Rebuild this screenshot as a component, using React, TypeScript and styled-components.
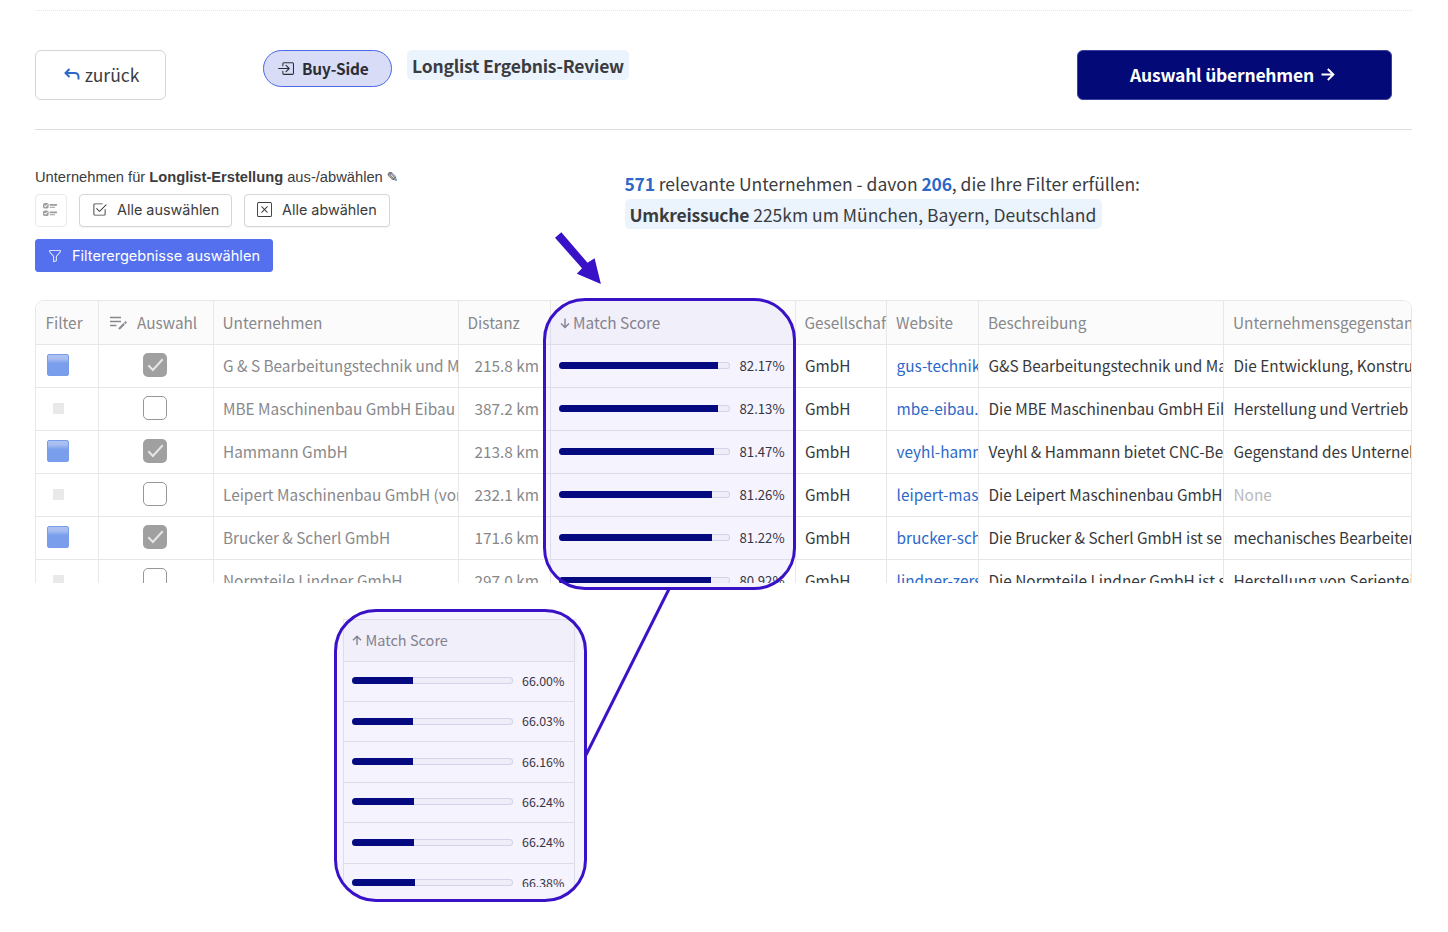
import React from "react";
import styled, { createGlobalStyle } from "styled-components";
import { BsBoxArrowInRight, BsCheck2Square, BsFunnel, BsUiChecks, BsXSquare } from "react-icons/bs";

const sans = `"Noto Sans CJK SC", "Noto Sans", sans-serif`;

const GlobalStyle = createGlobalStyle`
  * { box-sizing: border-box; }
  body { margin: 0; background: #fff; color: #3b3c40; font-family: ${sans}; overflow: hidden; }
  button { font: inherit; color: inherit; margin: 0; }
`;

const Page = styled.main`
  position: relative;
  width: 1448px;
  height: 932px;
  padding: 10px 36px 0 35px;
  overflow: hidden;
`;

const Header = styled.header`
  display: flex;
  align-items: flex-start;
  height: 120px;
  padding: 39px 20px 0 0;
  border-top: 1px dotted #e4e4e6;
  border-bottom: 1px solid #dcdcde;
`;

const BackButton = styled.button`
  display: flex;
  align-items: center;
  justify-content: center;
  gap: 5px;
  width: 131px;
  height: 50px;
  padding: 0 0 1px 2px;
  border: 1px solid #d5d5d8;
  border-radius: 6px;
  background: #fff;
  font-size: 17.5px;
  line-height: 24px;
`;

const SidePill = styled.div`
  display: flex;
  align-items: center;
  gap: 8px;
  width: 129px;
  height: 37px;
  margin-left: 97px;
  padding: 0 0 1px 13px;
  border: 1px solid #4c68e6;
  border-radius: 19px;
  background: #d8dcf6;
  color: #2c2d34;
  font-size: 15.4px;
  font-weight: 700;
  letter-spacing: -0.12px;
  line-height: 20px;
`;

const Highlight = styled.span<{ $w: number }>`
  display: block;
  width: ${(p) => p.$w}px;
  height: 30px;
  padding-left: 5px;
  border-radius: 5px;
  background: #ebf3fd;
  font-size: 17.5px;
  line-height: 32px;
  white-space: nowrap;
`;

const TitleBadge = styled.div`
  margin-left: 15px;
  font-weight: 700;
  letter-spacing: -0.21px;
`;

const ApplyButton = styled.button`
  display: flex;
  align-items: center;
  justify-content: center;
  gap: 7px;
  width: 315px;
  height: 50px;
  margin: 0 0 0 auto;
  padding: 0 4px 1px 0;
  border: 1px solid #3c4299;
  border-radius: 6px;
  background: #030a78;
  color: #fff;
  font-size: 17.5px;
  font-weight: 700;
  letter-spacing: -0.23px;
  line-height: 24px;
`;

const Controls = styled.section`
  display: flex;
  height: 170px;
  padding-top: 38px;
`;

const Selection = styled.div`
  width: 589.5px;
`;

const Caption = styled.p`
  height: 18px;
  margin: 0;
  font-family: "Liberation Sans", Arial, sans-serif;
  font-size: 14.7px;
  line-height: 18px;
  white-space: nowrap;
`;

const Pencil = styled.span`
  font-family: "DejaVu Sans", sans-serif;
  font-size: 14px;
  line-height: 1;
`;

const ButtonRow = styled.div<{ $top: number }>`
  display: flex;
  margin-top: ${(p) => p.$top}px;
`;

const ToolButton = styled.button<{ $w: number; $left?: number; $primary?: boolean; $faint?: boolean }>`
  display: flex;
  align-items: center;
  gap: 10px;
  width: ${(p) => p.$w}px;
  height: 33px;
  margin-left: ${(p) => p.$left ?? 0}px;
  padding: 0 0 ${(p) => (p.$primary ? 0 : 2)}px ${(p) => (p.$faint ? 7 : 12)}px;
  border: 1px solid ${(p) => (p.$primary ? "#5470ee" : p.$faint ? "#e9e9ec" : "#d5d5da")};
  border-radius: ${(p) => (p.$primary ? 3 : 4)}px;
  background: ${(p) => (p.$primary ? "#5470ee" : "#fff")};
  box-shadow: ${(p) => (p.$primary || p.$faint ? "none" : "0 1px 1px rgba(0, 0, 0, 0.05)")};
  color: ${(p) => (p.$primary ? "#fff" : p.$faint ? "#9c9ca0" : "#3b3c40")};
  font-family: Inter, Roboto, sans-serif;
  font-size: ${(p) => (p.$primary ? 14.55 : 14.4)}px;
  white-space: nowrap;
`;

const Summary = styled.div`
  font-size: 17.5px;
  line-height: 30px;
`;

const SummaryLine = styled.p`
  margin: 1px 0 0;
  white-space: nowrap;
`;

const Strong = styled.b`
  letter-spacing: -0.23px;
`;

const Count = styled(Strong)`
  color: #2d68c9;
`;

const Grid = styled.section`
  height: 283px;
  overflow: hidden;
  border: 1px solid #e7e7ea;
  border-bottom: 0;
  border-radius: 9px 9px 0 0;
`;

const GridRow = styled.div<{ $head?: boolean }>`
  display: grid;
  grid-template-columns: 63px 115px 245px 92px 245px 91px 92px 245px 187px;
  height: ${(p) => (p.$head ? 44 : 43)}px;
  background: ${(p) => (p.$head ? "#fbfbfc" : "#fff")};
`;

type Tone = "muted" | "link" | "none" | "dark";
const tones: Record<Tone, string> = { muted: "#88888b", link: "#2d68c9", none: "#b9b9bd", dark: "#37383c" };

const Cell = styled.div<{ $tone?: Tone; $end?: boolean; $inset?: number }>`
  display: flex;
  align-items: center;
  justify-content: ${(p) => (p.$end ? "flex-end" : "flex-start")};
  min-width: 0;
  overflow: hidden;
  padding: ${(p) => (p.$end ? "0 11px 3px 0" : `0 0 3px ${p.$inset ?? 9}px`)};
  border-right: 1px solid #e7e7ea;
  border-bottom: 1px solid #e7e7ea;
  color: ${(p) => tones[p.$tone ?? "dark"]};
  font-size: 15.36px;
  line-height: 22px;
  white-space: nowrap;
  &:last-child { border-right: 0; }
`;

const HeadCell = styled(Cell).attrs({ $tone: "muted" as Tone })`
  padding: 0 0 1px ${(p) => p.$inset ?? 8.5}px;
`;

const FilterCell = styled(Cell)`
  padding: 0 0 1px 11px;
`;

const Match = styled.span`
  width: 22px;
  height: 22px;
  margin-bottom: 2px;
  border: 1px solid #769ceb;
  border-radius: 2px;
  background: linear-gradient(#aec3f1 0, #a6bdf0 20%, #799eeb 42%);
`;

const NoMatch = styled.span`
  width: 11px;
  height: 11px;
  margin-left: 6px;
  background: #e9e9ea;
`;

const CheckCell = styled(Cell)`
  justify-content: center;
  padding: 0 2px 2px 0;
`;

const CheckBox = styled.span<{ $on: boolean }>`
  display: flex;
  align-items: center;
  justify-content: center;
  width: 24px;
  height: 24px;
  border: ${(p) => (p.$on ? "0" : "1.5px solid #97979a")};
  border-radius: 5px;
  background: ${(p) => (p.$on ? "#a0a0a1" : "#fff")};
`;

const ScoreCell = styled(Cell)`
  padding: 0 0 1px 8px;
`;

const Track = styled.span<{ $small?: boolean }>`
  flex: none;
  width: ${(p) => (p.$small ? 161 : 171)}px;
  height: 7px;
  overflow: hidden;
  border-radius: 4px;
  background: #f9f9f9;
  box-shadow: inset 0 0 0 1px #dcdeea;
`;

const Fill = styled.span`
  display: block;
  height: 7px;
  background: #030a7c;
`;

const Percent = styled.span<{ $small?: boolean }>`
  margin-left: ${(p) => (p.$small ? 9 : 9.5)}px;
  font-size: ${(p) => (p.$small ? 12.4 : 13.2)}px;
  color: #37383c;
`;

const Inset = styled.section`
  width: 234px;
  height: 268px;
  margin: 36px 0 0 308px;
  overflow: hidden;
  border-top: 1px solid #e7e7ea;
  border-left: 1px solid #e7e7ea;
`;

const InsetRow = styled.div<{ $head?: boolean }>`
  display: grid;
  grid-template-columns: 231px;
  height: ${(p) => (p.$head ? 41.6 : 40.4)}px;
  background: ${(p) => (p.$head ? "#fbfbfc" : "#fff")};
  ${Cell} { border-right: 1px solid #e7e7ea; }
`;

const InsetHead = styled(Cell)`
  font-size: 14.5px;
  padding: 0 0 1px 8px;
`;

const Callout = styled.div<{ $x: number; $y: number; $h: number }>`
  position: absolute;
  left: ${(p) => p.$x}px;
  top: ${(p) => p.$y}px;
  width: 253px;
  height: ${(p) => p.$h}px;
  border: 3px solid #3912c8;
  border-radius: 42px;
  background: rgba(60, 20, 220, 0.05);
  pointer-events: none;
`;

const Annotations = styled.svg`
  position: absolute;
  left: 0;
  top: 0;
  pointer-events: none;
`;

const SortArrow = styled.svg`
  flex: none;
  margin: 1px 3.5px 0 0;
`;

const BackIcon = () => (
  <svg width="16" height="14" viewBox="0 0 16 14" fill="none" stroke="#2d68c9" strokeWidth="2">
    <path d="M5.5 1 1.5 5l4 4M1.8 5h8.7c2.4 0 4 1.6 4 4v2.6" />
  </svg>
);

const ForwardIcon = () => (
  <svg width="14" height="14" viewBox="0 0 14 14" fill="none" stroke="#fff" strokeWidth="1.9">
    <path d="M.5 6.5h12M6.8 1 12.4 6.5 6.8 12" />
  </svg>
);

const EditIcon = () => (
  <svg width="18" height="16" viewBox="0 0 18 16" fill="none" stroke="#88888b" strokeWidth="1.3">
    <path d="M0 3.5h11M0 7.5h11M0 11.5h6.5" />
    <path d="m9 15 5.2-5.2" strokeWidth="2" />
    <path d="m14.8 9.2 1.4-1.4" strokeWidth="2.2" />
  </svg>
);

const Tick = () => (
  <svg width="17" height="14" viewBox="0 0 17 14" fill="none" stroke="#e6e6e7" strokeWidth="2">
    <path d="m1.3 7.2 4.6 4.8L15.7 1.3" />
  </svg>
);

const Sort = ({ up }: { up?: boolean }) => (
  <SortArrow width="10" height="12" viewBox="0 0 10 12" fill="none" stroke="#88888b" strokeWidth="1.4">
    {up ? <path d="M5 11V2.3M1 6.2l4-4 4 4" /> : <path d="M5 1.5v9M1 6.6l4 4 4-4" />}
  </SortArrow>
);

const Score = ({ value, fill, small }: { value: string; fill: number; small?: boolean }) => (
  <ScoreCell>
    <Track $small={small}>
      <Fill style={{ width: fill }} />
    </Track>
    <Percent $small={small}>{value}</Percent>
  </ScoreCell>
);

const companies = [
  { on: true, name: "G & S Bearbeitungstechnik und Maschinenbau", km: "215.8 km", score: "82.17%", fill: 159, site: "gus-technik.de", text: "G&S Bearbeitungstechnik und Maschinenbau", purpose: "Die Entwicklung, Konstruktion" },
  { on: false, name: "MBE Maschinenbau GmbH Eibau", km: "387.2 km", score: "82.13%", fill: 159, site: "mbe-eibau.de", text: "Die MBE Maschinenbau GmbH Eibau", purpose: "Herstellung und Vertrieb" },
  { on: true, name: "Hammann GmbH", km: "213.8 km", score: "81.47%", fill: 155, site: "veyhl-hammann.de", text: "Veyhl & Hammann bietet CNC-Bearbeitung", purpose: "Gegenstand des Unternehmens" },
  { on: false, name: "Leipert Maschinenbau GmbH (vormals", km: "232.1 km", score: "81.26%", fill: 153, site: "leipert-maschinenbau.de", text: "Die Leipert Maschinenbau GmbH", purpose: "None" },
  { on: true, name: "Brucker & Scherl GmbH", km: "171.6 km", score: "81.22%", fill: 153, site: "brucker-scherl.de", text: "Die Brucker & Scherl GmbH ist seit", purpose: "mechanisches Bearbeiten" },
  { on: false, name: "Normteile Lindner GmbH", km: "297.0 km", score: "80.92%", fill: 152, site: "lindner-zerspanung.de", text: "Die Normteile Lindner GmbH ist seit", purpose: "Herstellung von Serienteilen" },
];

const lowest = [
  { value: "66.00%", fill: 61 },
  { value: "66.03%", fill: 61 },
  { value: "66.16%", fill: 61 },
  { value: "66.24%", fill: 62 },
  { value: "66.24%", fill: 62 },
  { value: "66.38%", fill: 63 },
];

const AuswahlLabel = styled.span`
  margin-left: 9px;
`;

export default function App() {
  return (
    <Page>
      <GlobalStyle />
      <Header>
        <BackButton><BackIcon />zurück</BackButton>
        <SidePill><BsBoxArrowInRight size={17} />Buy-Side</SidePill>
        <TitleBadge><Highlight $w={222}>Longlist Ergebnis-Review</Highlight></TitleBadge>
        <ApplyButton>Auswahl übernehmen<ForwardIcon /></ApplyButton>
      </Header>

      <Controls>
        <Selection>
          <Caption>Unternehmen für <b>Longlist-Erstellung</b> aus-/abwählen <Pencil>✎</Pencil></Caption>
          <ButtonRow $top={8}>
            <ToolButton $w={32} $faint><BsUiChecks size={15} /></ToolButton>
            <ToolButton $w={153} $left={12}><BsCheck2Square size={15} />Alle auswählen</ToolButton>
            <ToolButton $w={146} $left={12}><BsXSquare size={15} />Alle abwählen</ToolButton>
          </ButtonRow>
          <ButtonRow $top={12}>
            <ToolButton $w={238} $primary><BsFunnel size={14} />Filterergebnisse auswählen</ToolButton>
          </ButtonRow>
        </Selection>
        <Summary>
          <SummaryLine><Count>571</Count> relevante Unternehmen - davon <Count>206</Count>, die Ihre Filter erfüllen:</SummaryLine>
          <Highlight $w={477}><Strong>Umkreissuche</Strong> 225km um München, Bayern, Deutschland</Highlight>
        </Summary>
      </Controls>

      <Grid>
        <GridRow $head>
          <HeadCell $inset={9.5}>Filter</HeadCell>
          <HeadCell $inset={11}><EditIcon /><AuswahlLabel>Auswahl</AuswahlLabel></HeadCell>
          <HeadCell>Unternehmen</HeadCell>
          <HeadCell>Distanz</HeadCell>
          <HeadCell><Sort />Match Score</HeadCell>
          <HeadCell>Gesellschaftsform</HeadCell>
          <HeadCell $inset={9}>Website</HeadCell>
          <HeadCell $inset={9}>Beschreibung</HeadCell>
          <HeadCell $inset={9}>Unternehmensgegenstand</HeadCell>
        </GridRow>
        {companies.map((c) => (
          <GridRow key={c.name}>
            <FilterCell>{c.on ? <Match /> : <NoMatch />}</FilterCell>
            <CheckCell><CheckBox $on={c.on}>{c.on && <Tick />}</CheckBox></CheckCell>
            <Cell $tone="muted">{c.name}</Cell>
            <Cell $tone="muted" $end>{c.km}</Cell>
            <Score value={c.score} fill={c.fill} />
            <Cell>GmbH</Cell>
            <Cell $tone="link" $inset={9.6}>{c.site}</Cell>
            <Cell $inset={9.5}>{c.text}</Cell>
            <Cell $inset={9.5} $tone={c.purpose === "None" ? "none" : "dark"}>{c.purpose}</Cell>
          </GridRow>
        ))}
      </Grid>

      <Inset>
        <InsetRow $head><InsetHead $tone="muted"><Sort up />Match Score</InsetHead></InsetRow>
        {lowest.map((s, i) => (
          <InsetRow key={i}><Score value={s.value} fill={s.fill} small /></InsetRow>
        ))}
      </Inset>

      <Callout $x={543} $y={298} $h={292} />
      <Callout $x={334} $y={609} $h={293} />
      <Annotations width="1448" height="932" viewBox="0 0 1448 932">
        <path fill="#3912c8" d="m555 237.7 6.3-5.4 26.2 30.4 7.1-4.4 6.3 25.7-24.1-10.3 5.2-5.4z" />
        <path stroke="#3912c8" strokeWidth="3" d="m669 589-83 166" />
      </Annotations>
    </Page>
  );
}
